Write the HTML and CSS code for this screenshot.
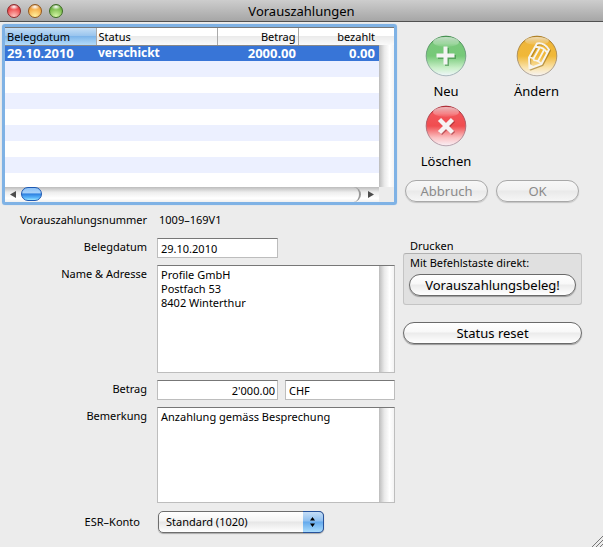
FILE: index.html
```html
<!DOCTYPE html>
<html lang="de">
<head>
<meta charset="utf-8">
<title>Vorauszahlungen</title>
<link rel="stylesheet" href="styles.css">
</head>
<body>
<header class="titlebar">
  <div class="lights">
    <button class="light red" type="button" aria-label="Schliessen"></button>
    <button class="light amber" type="button" aria-label="Minimieren"></button>
    <button class="light green" type="button" aria-label="Zoomen"></button>
  </div>
  <h1>Vorauszahlungen</h1>
</header>
<main class="content">
  <section class="primary">
    <div class="list">
      <div class="list-body">
        <table>
          <colgroup><col class="c-date"><col class="c-status"><col class="c-amount"><col class="c-paid"></colgroup>
          <thead><tr><th class="sorted">Belegdatum</th><th>Status</th><th class="num">Betrag</th><th class="num last">bezahlt</th></tr></thead>
          <tbody><tr><td class="figure">29.10.2010</td><td>verschickt</td><td class="num figure">2000.00</td><td class="num last figure">0.00</td></tr></tbody>
        </table>
        <div class="vtrack list-vtrack"></div>
      </div>
      <div class="hscroll">
        <svg class="arrow" viewBox="0 0 18 15"><path d="M11 4v7L5 7.500z"/></svg>
        <div class="htrack"><div class="thumb"></div></div>
        <svg class="arrow" viewBox="0 0 18 15"><path d="M7 4v7l6-3.500z"/></svg>
        <div class="corner"></div>
      </div>
    </div>
    <form class="form">
      <span class="label">Vorauszahlungsnummer</span>
      <output class="value">1009–169V1</output>
      <label class="label" for="date">Belegdatum</label>
      <div class="fields"><input id="date" class="field" value="29.10.2010"></div>
      <label class="label" for="address">Name &amp; Adresse</label>
      <div class="memo address"><textarea id="address">Profile GmbH
Postfach 53
8402 Winterthur</textarea><div class="vtrack"></div></div>
      <label class="label" for="amount">Betrag</label>
      <div class="fields"><input id="amount" class="field amount" value="2'000.00"><input class="field currency" aria-label="Währung" value="CHF"></div>
      <label class="label" for="remark">Bemerkung</label>
      <div class="memo remark"><textarea id="remark">Anzahlung gemäss Besprechung</textarea><div class="vtrack"></div></div>
      <label class="label account-label" for="account">ESR–Konto</label>
      <div class="account">
        <select id="account"><option>Standard (1020)</option></select>
        <svg class="stepper" viewBox="0 0 20 20"><path d="M7 8.500L9.500 5l2.500 3.500zM7 11.500h5L9.500 15z"/></svg>
      </div>
    </form>
  </section>
  <aside class="side">
    <div class="actions">
      <button class="action" type="button">
        <svg viewBox="0 0 42 42">
          <defs>
            <linearGradient id="gGreen" x2="0" y2="1"><stop offset="0" stop-color="#3f9a47"/><stop offset=".18" stop-color="#79c87b"/><stop offset=".5" stop-color="#76c978"/><stop offset=".8" stop-color="#c9efc8"/><stop offset="1" stop-color="#f0f6fb"/></linearGradient>
            <linearGradient id="gAmber" x2="0" y2="1"><stop offset="0" stop-color="#c98c12"/><stop offset=".18" stop-color="#efb63a"/><stop offset=".5" stop-color="#f0b838"/><stop offset=".8" stop-color="#fae4ae"/><stop offset="1" stop-color="#f6f3f4"/></linearGradient>
            <linearGradient id="gRed" x2="0" y2="1"><stop offset="0" stop-color="#c4222b"/><stop offset=".18" stop-color="#f2555a"/><stop offset=".5" stop-color="#f04d50"/><stop offset=".8" stop-color="#fbc3c4"/><stop offset="1" stop-color="#f8f0f6"/></linearGradient>
            <linearGradient id="gShine" x2="0" y2="1"><stop offset="0" stop-color="#fff" stop-opacity=".7"/><stop offset="1" stop-color="#fff" stop-opacity=".05"/></linearGradient>
            <linearGradient id="rGreen" x2="0" y2="1"><stop offset="0" stop-color="#3c8a48"/><stop offset="1" stop-color="#a9b7bd"/></linearGradient>
            <linearGradient id="rAmber" x2="0" y2="1"><stop offset="0" stop-color="#a9791d"/><stop offset="1" stop-color="#b0a9a6"/></linearGradient>
            <linearGradient id="rRed" x2="0" y2="1"><stop offset="0" stop-color="#a8242e"/><stop offset="1" stop-color="#b7a5b0"/></linearGradient>
          </defs>
          <circle cx="21" cy="21" r="19.800" fill="url(#gGreen)" stroke="url(#rGreen)"/>
          <ellipse cx="21" cy="7" rx="13" ry="5" fill="url(#gShine)"/>
          <path d="M22 13v18M13 22h18" stroke="#2f7d39" stroke-opacity=".55" stroke-width="4"/>
          <path d="M20.500 11.500v18M11.500 20.500h18" stroke="#f4f4f4" stroke-width="4"/>
        </svg>
        <span>Neu</span>
      </button>
      <button class="action" type="button">
        <svg viewBox="0 0 42 42">
          <circle cx="21" cy="21" r="19.800" fill="url(#gAmber)" stroke="url(#rAmber)"/>
          <ellipse cx="21" cy="6" rx="12" ry="4" fill="url(#gShine)"/>
          <g fill="none" stroke-linejoin="round">
            <path d="M21 8.500c5-1 9 1.500 12 6L25.500 29l-12 4.500-.5-11z" transform="translate(1 1)" stroke="#8b6210" stroke-opacity=".55" stroke-width="2"/>
            <path d="M21 8.500c5-1 9 1.500 12 6L25.500 29l-12 4.500-.5-11z" stroke="#f7f5ee" stroke-width="2"/>
            <path d="M19.500 12c5-.5 9 1.500 11.500 5.500" stroke="#f7f5ee" stroke-width="2"/>
            <path d="M23.500 13L17 24.500M28 15l-6.500 12" stroke="#f7f5ee" stroke-width="1.800"/>
            <path d="M13 22.500c4 0 5 1 5 3 3-.5 5 .5 7 3" stroke="#f7f5ee" stroke-width="1.500"/>
          </g>
          <path d="M13 28.500l5 3-5 2.500z" fill="#f7f5ee"/>
        </svg>
        <span>Ändern</span>
      </button>
      <button class="action" type="button">
        <svg viewBox="0 0 42 42">
          <circle cx="21" cy="21" r="19.800" fill="url(#gRed)" stroke="url(#rRed)"/>
          <ellipse cx="21" cy="7" rx="13" ry="5" fill="url(#gShine)"/>
          <path d="M15.500 15.500l13 13M28.500 15.500l-13 13" stroke="#8e242b" stroke-opacity=".55" stroke-width="4.500"/>
          <path d="M14.500 14.500l13 13M27.500 14.500l-13 13" stroke="#f6f3f3" stroke-width="4.500"/>
        </svg>
        <span>Löschen</span>
      </button>
    </div>
    <div class="confirm">
      <button class="pill" type="button" disabled>Abbruch</button>
      <button class="pill" type="button" disabled>OK</button>
    </div>
    <h2>Drucken</h2>
    <div class="group">
      <p>Mit Befehlstaste direkt:</p>
      <button class="pill" type="button">Vorauszahlungsbeleg!</button>
    </div>
    <button class="pill reset" type="button">Status reset</button>
  </aside>
</main>
<svg class="grip" viewBox="0 0 12 12"><path d="M1 12L12 1M5 12l7-7M9 12l3-3" fill="none" stroke="#777" stroke-width="1"/></svg>
</body>
</html>
```
FILE: styles.css
```css
* { box-sizing: border-box; }
html { height: 100%; }
body {
  margin: 0;
  min-height: 100%;
  position: relative;
  background: #ececec;
  color: #000;
  font: 11px/14px "Noto Sans", "Open Sans", sans-serif;
}
button, input, textarea, select { font: inherit; color: inherit; margin: 0; }
h1, h2, p { margin: 0; font-weight: normal; }

.titlebar {
  display: grid;
  grid-template-columns: 1fr auto 1fr;
  align-items: center;
  height: 22px;
  padding: 0 7px;
  background: linear-gradient(#cdcdcd, #a6a6a6);
  border-bottom: 1px solid #515151;
}
.titlebar h1 { font-size: 13px; line-height: 20px; }
.lights { display: flex; gap: 7px; }
.light {
  width: 14px;
  height: 14px;
  padding: 0;
  border: 1px solid;
  border-radius: 50%;
}
.red { border-color: #8d2a2c; background: radial-gradient(ellipse 5px 3px at 50% 15%, #fff, transparent), radial-gradient(circle at 50% 95%, #ffc5c0, #ee4a4c 65%, #a92024); }
.amber { border-color: #93591e; background: radial-gradient(ellipse 5px 3px at 50% 15%, #fff, transparent), radial-gradient(circle at 50% 95%, #fff3a0, #f5ac48 65%, #b56a1a); }
.green { border-color: #3c6b24; background: radial-gradient(ellipse 5px 3px at 50% 15%, #fff, transparent), radial-gradient(circle at 50% 95%, #d8f8a8, #7abb4c 65%, #407c22); }

.content { display: flex; gap: 6px; padding: 2px 21px 0 2px; }
.primary { flex: 1; min-width: 0; }
.side { width: 179px; }

.list {
  border: 3px solid #7fb2e5;
  border-radius: 3px;
  box-shadow: 0 0 1px #9cc4ec;
}
.list-body {
  position: relative;
  height: 160px;
  border-top: 1px solid #777;
  background: repeating-linear-gradient(#fff 0 16px, #ecf0ff 16px 32px) 0 17px;
}
table { width: 100%; border-collapse: collapse; table-layout: fixed; }
.c-date { width: 91px; }
.c-amount { width: 81px; }
.c-paid { width: 96px; }
th, td { padding: 0 2px; text-align: left; white-space: nowrap; overflow: hidden; }
th {
  height: 17px;
  line-height: 15px;
  font-weight: normal;
  background: linear-gradient(#fff 45%, #ebebeb 50%, #fafafa);
  border-right: 1px solid #aaa;
  border-bottom: 1px solid #888;
}
th.last { border-right: 0; }
.sorted { background: linear-gradient(#c5def5, #9ac5ee 45%, #7eb5ea 50%, #b4dcfa); }
td { height: 16px; background: #3875d7; color: #fff; font-weight: bold; font-size: 12px; }
.figure { font-size: 13px; }
.num { text-align: right; }
.last { padding-right: 19px; }

.vtrack { width: 15px; background: linear-gradient(90deg, #bcbcbc, #e9e9e9 35%, #fff 70%, #f3f3f3); }
.list-vtrack { position: absolute; top: 17px; right: 0; bottom: 0; }
.hscroll { display: flex; height: 15px; background: linear-gradient(#bcbcbc, #ededed 35%, #fff 75%, #f0f0f0); }
.arrow { width: 18px; height: 15px; fill: #4c4c4c; }
.htrack { flex: 1; border-right: 2px solid #999; border-radius: 0 8px 8px 0; }
.thumb {
  width: 21px;
  height: 14px;
  margin-left: -2px;
  border: 1px solid #1c58b2;
  border-radius: 7px;
  background: linear-gradient(#8cc0f5, #a8d2fa 40%, #2f80e0 50%, #58b4fa 80%, #9be6ff);
}
.corner { width: 15px; background: #ececec; }

.form {
  display: grid;
  grid-template-columns: 145px 1fr;
  column-gap: 10px;
  row-gap: 7px;
  padding: 6px 2px 0 0;
}
.label { text-align: right; line-height: 18px; }
.value { line-height: 18px; height: 20px; padding-left: 2px; }
.fields { display: flex; gap: 7px; }
.field {
  width: 121px;
  height: 20px;
  padding: 0 2px 0 3px;
  border: 1px solid #bdbdbd;
  border-top: 1px solid #777;
  background: #fff;
}
.amount { text-align: right; }
.currency { flex: 1; width: 0; }
.memo { display: flex; border: 1px solid #bdbdbd; border-top-color: #777; background: #fff; }
.memo textarea {
  flex: 1;
  min-width: 0;
  padding: 2px 3px;
  border: 0;
  background: transparent;
  resize: none;
  overflow: hidden;
}
.address { height: 108px; }
.remark { height: 96px; }
.account-label { padding-right: 7px; line-height: 24px; }
.account { position: relative; width: 167px; padding: 1px 0 0 1px; }
.account select {
  appearance: none;
  width: 100%;
  height: 22px;
  padding: 0 26px 0 7px;
  border: 1px solid #6e6e6e;
  border-radius: 5px;
  background: linear-gradient(#fff, #f4f4f4 45%, #e6e6e6 50%, #fff);
  box-shadow: 0 1px 1px #aaa;
}
.stepper {
  position: absolute;
  top: 1px;
  right: 0;
  width: 21px;
  height: 22px;
  border: 1px solid #27529a;
  border-left: 0;
  border-radius: 0 5px 5px 0;
  background: linear-gradient(#c6def7, #8dbff0 45%, #64a9ec 50%, #a9dcfd);
  pointer-events: none;
}

.actions { display: grid; grid-template-columns: 1fr 1fr; row-gap: 4px; padding: 11px 0 0 1px; margin-right: -3px; }
.action {
  display: flex;
  flex-direction: column;
  align-items: center;
  width: 84px;
  padding: 0;
  border: 0;
  background: none;
  font-size: 13px;
  line-height: 20px;
}
.action svg { width: 42px; height: 42px; margin-bottom: 4px; }
.confirm { display: flex; gap: 8px; margin: 9px 3px 0 2px; }
.pill {
  display: block;
  width: 100%;
  height: 22px;
  padding: 0;
  border: 1px solid #6a6a6a;
  border-radius: 11px;
  background: linear-gradient(#fff, #f8f8f8 45%, #ebebeb 50%, #fff);
  box-shadow: 0 1px 1px #999;
  font-size: 13px;
  line-height: 18px;
}
.pill:disabled { color: #8a8a8a; border-color: #a8a8a8; background: linear-gradient(#f7f7f7, #f1f1f1 45%, #e9e9e9 50%, #f6f6f6); box-shadow: 0 1px 1px #c4c4c4; }
.side h2 { margin: 37px 0 0 7px; font-size: 11px; line-height: 14px; }
.group {
  height: 52px;
  padding: 2px 5px 0;
  border: 1px solid #c4c4c4;
  border-top-color: #b0b0b0;
  border-radius: 3px;
  background: #e0e0e0;
}
.group p { margin: 0 0 4px 1px; }
.reset { margin-top: 17px; }
.grip { position: absolute; right: 0; bottom: 0; width: 12px; height: 12px; }
```
